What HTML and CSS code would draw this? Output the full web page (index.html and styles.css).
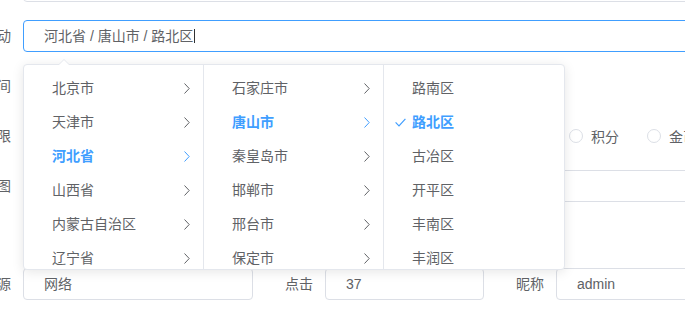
FILE: index.html
```html
<!DOCTYPE html>
<html>
<head>
  <title>编辑文章</title>
  <meta charset="UTF-8">
  <link rel="stylesheet" href="styles.css">
</head>
<body>
  <div class="form">
    <div class="form-item">
      <label class="item-label">标题</label>
      <div class="item-content"><div class="input"><span class="input-text">唐山新闻</span></div></div>
    </div>

    <div class="form-item">
      <label class="item-label">联动</label>
      <div class="item-content cascader">
        <div class="input is-focus">
          <span class="input-text">河北省 / 唐山市 / 路北区</span><span class="caret"></span>
        </div>
        <div class="cascader-panel">
          <div class="menu">
            <div class="node"><span>北京市</span><svg class="node-arrow" width="6" height="11" viewBox="0 0 6 11"><polyline points="0.5,0.5 5.2,5.5 0.5,10.5"/></svg></div>
            <div class="node"><span>天津市</span><svg class="node-arrow" width="6" height="11" viewBox="0 0 6 11"><polyline points="0.5,0.5 5.2,5.5 0.5,10.5"/></svg></div>
            <div class="node active"><span>河北省</span><svg class="node-arrow" width="6" height="11" viewBox="0 0 6 11"><polyline points="0.5,0.5 5.2,5.5 0.5,10.5"/></svg></div>
            <div class="node"><span>山西省</span><svg class="node-arrow" width="6" height="11" viewBox="0 0 6 11"><polyline points="0.5,0.5 5.2,5.5 0.5,10.5"/></svg></div>
            <div class="node"><span>内蒙古自治区</span><svg class="node-arrow" width="6" height="11" viewBox="0 0 6 11"><polyline points="0.5,0.5 5.2,5.5 0.5,10.5"/></svg></div>
            <div class="node"><span>辽宁省</span><svg class="node-arrow" width="6" height="11" viewBox="0 0 6 11"><polyline points="0.5,0.5 5.2,5.5 0.5,10.5"/></svg></div>
          </div>
          <div class="menu">
            <div class="node"><span>石家庄市</span><svg class="node-arrow" width="6" height="11" viewBox="0 0 6 11"><polyline points="0.5,0.5 5.2,5.5 0.5,10.5"/></svg></div>
            <div class="node active"><span>唐山市</span><svg class="node-arrow" width="6" height="11" viewBox="0 0 6 11"><polyline points="0.5,0.5 5.2,5.5 0.5,10.5"/></svg></div>
            <div class="node"><span>秦皇岛市</span><svg class="node-arrow" width="6" height="11" viewBox="0 0 6 11"><polyline points="0.5,0.5 5.2,5.5 0.5,10.5"/></svg></div>
            <div class="node"><span>邯郸市</span><svg class="node-arrow" width="6" height="11" viewBox="0 0 6 11"><polyline points="0.5,0.5 5.2,5.5 0.5,10.5"/></svg></div>
            <div class="node"><span>邢台市</span><svg class="node-arrow" width="6" height="11" viewBox="0 0 6 11"><polyline points="0.5,0.5 5.2,5.5 0.5,10.5"/></svg></div>
            <div class="node"><span>保定市</span><svg class="node-arrow" width="6" height="11" viewBox="0 0 6 11"><polyline points="0.5,0.5 5.2,5.5 0.5,10.5"/></svg></div>
          </div>
          <div class="menu last">
            <div class="node"><span>路南区</span></div>
            <div class="node active"><svg class="node-check" width="11" height="9" viewBox="0 0 11 9"><polyline points="0.6,4.4 4,7.8 10.4,0.8"/></svg><span>路北区</span></div>
            <div class="node"><span>古冶区</span></div>
            <div class="node"><span>开平区</span></div>
            <div class="node"><span>丰南区</span></div>
            <div class="node"><span>丰润区</span></div>
          </div>
        </div>
      </div>
    </div>

    <div class="form-item">
      <label class="item-label">时间</label>
      <div class="item-content"><div class="input date"></div></div>
    </div>

    <div class="form-item">
      <label class="item-label">权限</label>
      <div class="item-content radio-group">
        <label class="radio"><span class="radio-inner"></span>全部</label>
        <label class="radio"><span class="radio-inner"></span>公开</label>
        <label class="radio"><span class="radio-inner"></span>私密</label>
        <label class="radio"><span class="radio-inner"></span>好友</label>
        <label class="radio"><span class="radio-inner"></span>会员</label>
        <label class="radio"><span class="radio-inner"></span>付费</label>
        <label class="radio"><span class="radio-inner"></span>密码</label>
        <label class="radio"><span class="radio-inner"></span>积分</label>
        <label class="radio"><span class="radio-inner"></span>金币</label>
      </div>
    </div>

    <div class="form-item">
      <label class="item-label">封面图</label>
      <div class="item-content"><div class="input"></div></div>
    </div>

    <div class="form-item upload">
      <label class="item-label"></label>
      <div class="item-content"><div class="thumb"></div></div>
    </div>

    <div class="form-row">
      <div class="form-item">
        <label class="item-label">来源</label>
        <div class="item-content"><div class="input source"><span class="input-text">网络</span></div></div>
      </div>
      <div class="form-item">
        <label class="item-label">点击</label>
        <div class="item-content"><div class="input hits"><span class="input-text">37</span></div></div>
      </div>
      <div class="form-item grow">
        <label class="item-label">昵称</label>
        <div class="item-content"><div class="input"><span class="input-text">admin</span></div></div>
      </div>
    </div>
  </div>
</body>
</html>
```

FILE: styles.css
```css
html, body {
  margin: 0;
  overflow: hidden;
  background: #fff;
}

body {
  font-family: "Helvetica Neue", Helvetica, "Liberation Sans", "Noto Sans CJK SC", sans-serif;
  font-size: 14px;
  color: #606266;
}

.form {
  width: 800px;
  margin-top: -30px;
  margin-left: -57px;
}

.form-item {
  display: flex;
  margin-bottom: 18px;
}

.form-item.upload {
  margin-bottom: 16px;
}

.item-label {
  width: 80px;
  flex-shrink: 0;
  box-sizing: border-box;
  padding-right: 12px;
  text-align: right;
  line-height: 32px;
  height: 32px;
  color: #606266;
  white-space: nowrap;
  overflow: hidden;
  direction: rtl;
}

.item-content {
  flex: 1;
  min-width: 0;
}

.input {
  box-sizing: border-box;
  height: 32px;
  line-height: 30px;
  border: 1px solid #dcdfe6;
  border-radius: 4px;
  padding: 0 20px;
  color: #606266;
  background: #fff;
  white-space: nowrap;
}

.input.is-focus {
  border-color: #409eff;
}

.input.date {
  width: 220px;
}

.caret {
  display: inline-block;
  width: 1px;
  height: 14px;
  margin-left: 1px;
  background: #303133;
  vertical-align: -2px;
}

.cascader {
  position: relative;
}

.cascader-panel {
  position: absolute;
  top: calc(100% + 12px);
  left: 0;
  z-index: 10;
  display: flex;
  border: 1px solid #e4e7ed;
  border-radius: 4px;
  background: #fff;
  box-shadow: 0 2px 12px 0 rgba(0, 0, 0, 0.1);
}

.cascader-panel::before,
.cascader-panel::after {
  content: "";
  position: absolute;
  left: 34px;
  border: 6px solid transparent;
  border-top-width: 0;
}

.cascader-panel::before {
  top: -6px;
  border-bottom-color: #e4e7ed;
}

.cascader-panel::after {
  top: -5px;
  border-bottom-color: #fff;
}

.menu {
  box-sizing: border-box;
  width: 180px;
  height: 204px;
  padding-top: 6px;
  overflow: hidden;
  border-right: 1px solid #e4e7ed;
}

.menu.last {
  border-right: none;
}

.node {
  position: relative;
  height: 34px;
  line-height: 34px;
  padding: 0 30px 0 28px;
  color: #606266;
  white-space: nowrap;
}

.node.active {
  color: #409eff;
  font-weight: bold;
}

.node-arrow {
  position: absolute;
  right: 13px;
  top: 12px;
  fill: none;
  stroke: #606266;
  stroke-width: 1;
}

.node.active .node-arrow {
  stroke: #409eff;
}

.node-check {
  position: absolute;
  left: 11px;
  top: 13px;
  fill: none;
  stroke: #409eff;
  stroke-width: 1.2;
}

.radio-group {
  display: flex;
  align-items: center;
  height: 32px;
  white-space: nowrap;
}

.radio {
  display: flex;
  align-items: center;
  margin-right: 28px;
  color: #606266;
}

.radio-inner {
  box-sizing: border-box;
  width: 14px;
  height: 14px;
  margin-right: 8px;
  border: 1px solid #dcdfe6;
  border-radius: 50%;
  background: #fff;
}

.thumb {
  width: 100px;
  height: 32px;
  margin-left: 2px;
  background: #f5f7fa;
}

.form-row {
  display: flex;
}

.form-row .form-item .item-label {
  width: 72px;
}

.form-row .form-item:first-child .item-label {
  width: 80px;
}

.input.source {
  width: 230px;
}

.input.hits {
  width: 159px;
}

.form-item.grow {
  flex: 1;
}
```
